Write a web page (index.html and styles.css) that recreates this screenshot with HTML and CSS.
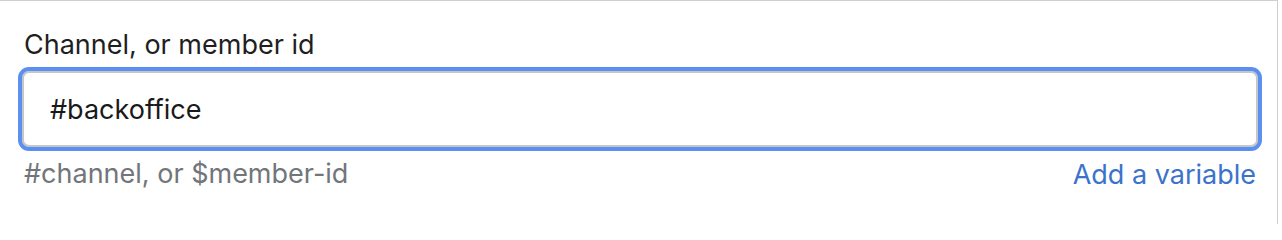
FILE: index.html
```html
<!DOCTYPE html>
<html>
<head>
<meta charset="utf-8">
<link rel="stylesheet" href="styles.css">
</head>
<body>
<div class="panel">
  <div class="field">
    <label class="label" for="channel">Channel, or member id</label>
    <input class="input" id="channel" type="text" value="#backoffice">
    <div class="footer">
      <span class="hint">#channel, or $member-id</span>
      <a class="link" href="#">Add a variable</a>
    </div>
  </div>
</div>
</body>
</html>
```
FILE: styles.css
```css
html, body {
  margin: 0;
  padding: 0;
  background: #ffffff;
}
body {
  font-family: Inter, "Liberation Sans", sans-serif;
}
.panel {
  width: 1278px;
  height: 224px;
  box-sizing: border-box;
  border-top: 1px solid #cfcfcf;
  border-right: 1px solid #cfcfcf;
  padding: 26px 19px 0 22px;
}
.field {
  display: flex;
  flex-direction: column;
}
.label {
  font-size: 27px;
  line-height: 36px;
  color: #1f1f1f;
  margin-left: 2px;
  margin-bottom: 8px;
}
.input {
  box-sizing: border-box;
  width: 100%;
  height: 76px;
  border: 2px solid #c6c6c6;
  border-radius: 7px;
  padding: 0 26px;
  font-family: inherit;
  font-size: 27px;
  color: #1a1a1a;
  outline: 4px solid #5b8ff0;
  outline-offset: 0;
  background: #fff;
}
.footer {
  display: flex;
  justify-content: space-between;
  align-items: baseline;
  margin-top: 10px;
}
.hint {
  font-size: 27px;
  color: #72767b;
  margin-left: 2px;
}
.link {
  font-size: 27px;
  color: #3b73cc;
  text-decoration: none;
  margin-right: 2px;
  position: relative;
  top: 1px;
}
```
